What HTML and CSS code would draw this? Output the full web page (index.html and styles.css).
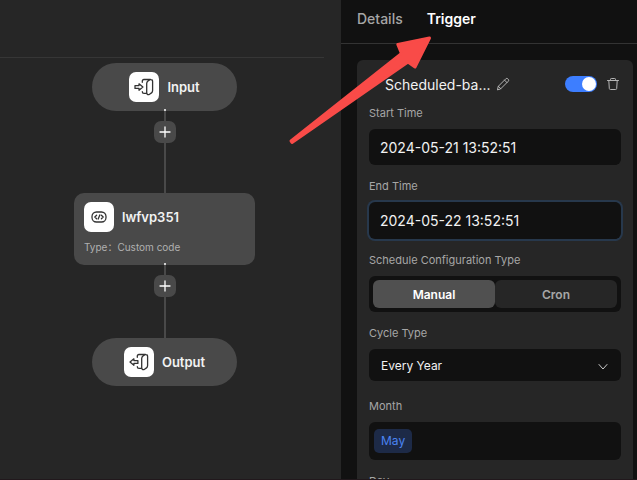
FILE: index.html
```html
<!DOCTYPE html>
<html lang="en">
<head>
<meta charset="utf-8">
<title>Workflow trigger</title>
<link rel="stylesheet" href="styles.css">
</head>
<body>
<div class="app">
  <main class="canvas">
    <div class="canvas-header"></div>
    <div class="flow">
      <section class="node pill">
        <span class="node-icon">
          <svg width="20" height="18" viewBox="0 0 20 18">
            <path d="M1 7.600h4V5.800L8.900 9 5 12.200V10.400H1z"/>
            <path d="M8.300 4.300V3.300Q8.300 1.500 10 1.500H16.500M8.300 13.700Q8.300 15.300 10 15.300H12.500M12.700 5.500Q12.700 4 14 3L16 1.600Q18.600 1.200 18.600 3.500V12.500Q18.600 14 17.500 14.900L15.500 16.300Q12.700 17.300 12.700 14.500Z"/>
          </svg>
        </span>
        <h2 class="node-title">Input</h2>
      </section>
      <div class="connector long">
        <button class="add" aria-label="Add node after Input"><svg width="12" height="12" viewBox="0 0 12 12"><path d="M6 1v10M1 6h10"/></svg></button>
      </div>
      <section class="node code">
        <div class="node-head">
          <span class="node-icon">
            <svg width="16" height="12" viewBox="0 0 16 12">
              <rect x="1" y="1" width="14" height="10" rx="4.500"/>
              <path d="M5.600 4.300L3.800 6l1.800 1.700M10.400 4.300L12.200 6l-1.800 1.700M8.800 3.900L7.200 8.100"/>
            </svg>
          </span>
          <h2 class="node-title">lwfvp351</h2>
        </div>
        <p class="node-type"><span>Type：</span><span>Custom code</span></p>
      </section>
      <div class="connector">
        <button class="add" aria-label="Add node after lwfvp351"><svg width="12" height="12" viewBox="0 0 12 12"><path d="M6 1v10M1 6h10"/></svg></button>
      </div>
      <section class="node pill">
        <span class="node-icon">
          <svg width="20" height="18" viewBox="0 0 20 18">
            <path d="M8.900 7.600H4.900V5.800L1 9l3.900 3.200V10.400h4z"/>
            <path d="M8.300 4.300V3.300Q8.300 1.500 10 1.500H16.500M8.300 13.700Q8.300 15.300 10 15.300H12.500M12.700 5.500Q12.700 4 14 3L16 1.600Q18.600 1.200 18.600 3.500V12.500Q18.600 14 17.500 14.900L15.500 16.300Q12.700 17.300 12.700 14.500Z"/>
          </svg>
        </span>
        <h2 class="node-title">Output</h2>
      </section>
    </div>
  </main>

  <aside class="panel">
    <nav class="tabs">
      <button class="tab">Details</button>
      <button class="tab active">Trigger</button>
    </nav>
    <form class="card">
      <header class="card-head">
        <button type="button" class="icon-btn collapse" aria-label="Collapse"><svg width="12" height="8" viewBox="0 0 12 8"><path d="M2 2l4 4 4-4"/></svg></button>
        <h3 class="card-title">Scheduled-ba...</h3>
        <button type="button" class="icon-btn edit" aria-label="Rename"><svg width="14" height="14" viewBox="0 0 14 14"><path d="M1.500 12.500L2.300 9.300 9.800 1.800Q10.800.9 11.800 1.800L12.300 2.300Q13.200 3.200 12.300 4.200L4.800 11.700ZM8.500 3.100L11 5.600M2.300 9.300L4.800 11.700"/></svg></button>
        <input class="switch" type="checkbox" role="switch" aria-label="Enabled" checked>
        <button type="button" class="icon-btn" aria-label="Delete"><svg width="12" height="14" viewBox="0 0 12 14"><path d="M.5 3.500H11.500M3.500 3.300V2.300Q3.500 1.500 4.300 1.500H7.700Q8.500 1.500 8.500 2.300V3.300M1.800 3.500L2.300 11.500Q2.400 12.500 3.400 12.500H8.600Q9.600 12.500 9.700 11.500L10.200 3.500"/></svg></button>
      </header>
      <div class="field">
        <label for="start">Start Time</label>
        <input id="start" class="control" type="text" value="2024-05-21 13:52:51">
      </div>
      <div class="field">
        <label for="end">End Time</label>
        <input id="end" class="control focused" type="text" value="2024-05-22 13:52:51">
      </div>
      <div class="field">
        <span class="label" id="config">Schedule Configuration Type</span>
        <div class="segments" role="group" aria-labelledby="config">
          <button type="button" class="segment selected">Manual</button>
          <button type="button" class="segment">Cron</button>
        </div>
      </div>
      <div class="field">
        <label for="cycle">Cycle Type</label>
        <div class="select-wrap">
          <select id="cycle"><option>Every Year</option></select>
          <svg class="chevron" width="10" height="8" viewBox="0 0 10 8"><path d="M1 1.500l4 4.500 4-4.500"/></svg>
        </div>
      </div>
      <div class="field">
        <label for="month">Month</label>
        <button type="button" id="month" class="tags"><span class="tag">May</span></button>
      </div>
      <div class="field">
        <label for="day">Day</label>
        <button type="button" id="day" class="tags"></button>
      </div>
    </form>
  </aside>
  <svg class="pointer" width="144" height="112" viewBox="288 35 144 112" aria-hidden="true">
    <path d="M291 141L401.500 53.500 397.800 44.500 429.500 38 415 67 408 62 292 142.500Z"/>
  </svg>
</div>
</body>
</html>
```
FILE: styles.css
```css
* {
  box-sizing: border-box;
}

body {
  margin: 0;
  background: #262626;
  color: #f2f2f2;
  font-family: Inter, "Noto Sans CJK SC", sans-serif;
  font-size: 12px;
}

h2, h3, p {
  margin: 0;
}

button, input, select {
  margin: 0;
  padding: 0;
  border: 0;
  background: none;
  color: inherit;
  font: inherit;
}

svg {
  display: block;
  fill: none;
  stroke: currentColor;
  stroke-linecap: round;
  stroke-linejoin: round;
}

.app {
  position: relative;
  display: flex;
  height: 100vh;
  overflow: hidden;
  border-bottom: 1px solid #21181c;
}

/* Canvas */
.canvas {
  flex: 1;
  min-width: 0;
  padding-right: 12px;
}

.canvas-header {
  height: 58px;
  margin-right: 5px;
  border-bottom: 1px solid #363636;
}

.flow {
  display: flex;
  flex-direction: column;
  align-items: center;
  padding-top: 5px;
}

.node {
  background: #494949;
}

.pill {
  display: flex;
  align-items: center;
  justify-content: center;
  gap: 8px;
  width: 145px;
  height: 48px;
  border-radius: 24px;
}

.code {
  width: 181px;
  height: 72px;
  padding: 9px 10px;
  border-radius: 10px;
}

.node-head {
  display: flex;
  align-items: center;
  gap: 8px;
}

.node-icon {
  display: flex;
  align-items: center;
  justify-content: center;
  width: 30px;
  height: 30px;
  border-radius: 7px;
  background: #fff;
  color: #333;
}

.node-icon svg {
  stroke-width: 1.3;
}

.node-title {
  font-size: 13px;
  font-weight: 600;
  line-height: 20px;
}

.node-type {
  display: flex;
  margin-top: 8px;
  color: #b0b0b0;
  font-size: 10px;
  line-height: 14px;
}

.connector {
  position: relative;
  width: 22px;
  height: 73px;
  padding-top: 10px;
  background: linear-gradient(#494949, #494949) center / 2px 100% no-repeat;
}

.connector.long {
  height: 82px;
}

.connector::before {
  content: "";
  position: absolute;
  top: -2px;
  left: 10px;
  width: 2px;
  height: 2px;
  border-radius: 1px;
  background: #fff;
}

.add {
  display: flex;
  align-items: center;
  justify-content: center;
  width: 22px;
  height: 22px;
  border-radius: 7px;
  background: #494949;
  color: #fff;
}

.add svg {
  stroke-width: 1.3;
}

/* Side panel */
.panel {
  flex: 0 0 296px;
  background: #111;
}

.tabs {
  display: flex;
  align-items: center;
  gap: 24px;
  height: 44px;
  padding: 0 16px 6px;
  border-bottom: 1px solid #333;
}

.tab {
  color: #a6a6a6;
  font-size: 14px;
  font-weight: 500;
  line-height: 20px;
}

.tab.active {
  color: #fff;
  font-weight: 600;
}

.card {
  margin: 16px 4px 0 16px;
  padding: 12px;
  border-radius: 6px;
  background: #262626;
}

.card-head {
  display: flex;
  align-items: center;
  height: 24px;
  margin-bottom: 9px;
  padding-right: 2px;
}

.card-title {
  margin-left: 4px;
  font-size: 14px;
  font-weight: 400;
}

.icon-btn {
  color: #b5b5b5;
}

.edit {
  margin-left: 5px;
}

.switch {
  display: flex;
  align-items: center;
  justify-content: flex-end;
  width: 32px;
  height: 16px;
  margin: 0 10px 0 auto;
  padding: 1px;
  border-radius: 8px;
  background: #3d7eff;
  appearance: none;
}

.switch::before {
  content: "";
  width: 14px;
  height: 14px;
  border-radius: 50%;
  background: #fff;
}

.field {
  min-height: 60px;
  margin-bottom: 13px;
}

.field label,
.label {
  display: block;
  margin-bottom: 8px;
  color: #a6a6a6;
  font-size: 11px;
  line-height: 16px;
}

.control {
  display: block;
  width: 100%;
  height: 36px;
  padding: 0 11px;
  border-radius: 6px;
  background: #111;
  font-size: 14px;
}

.control.focused {
  height: 37px;
  box-shadow: 0 0 0 2px #27384c;
}

.segments {
  display: grid;
  grid-template-columns: 1fr 1fr;
  height: 36px;
  padding: 4px;
  border-radius: 6px;
  background: #111;
}

.segment {
  border-radius: 6px;
  background: #262626;
  color: #a6a6a6;
  font-weight: 600;
}

.segment.selected {
  background: #505050;
  color: #fff;
}

.select-wrap {
  position: relative;
}

.select-wrap select {
  display: block;
  width: 100%;
  height: 32px;
  padding: 0 12px;
  border-radius: 6px;
  background: #111;
  appearance: none;
}

.chevron {
  position: absolute;
  top: 14px;
  right: 13px;
  color: #ccc;
  pointer-events: none;
}

.tags {
  display: flex;
  align-items: center;
  width: 100%;
  height: 38px;
  padding: 0 5px;
  border-radius: 6px;
  background: #111;
}

.tag {
  padding: 0 7px;
  border-radius: 5px;
  background: #1d2a47;
  color: #4a83f0;
  line-height: 24px;
}

.pointer {
  position: absolute;
  top: 35px;
  left: 288px;
  color: #f94b48;
  fill: currentColor;
  stroke-width: 3;
  pointer-events: none;
}
```
